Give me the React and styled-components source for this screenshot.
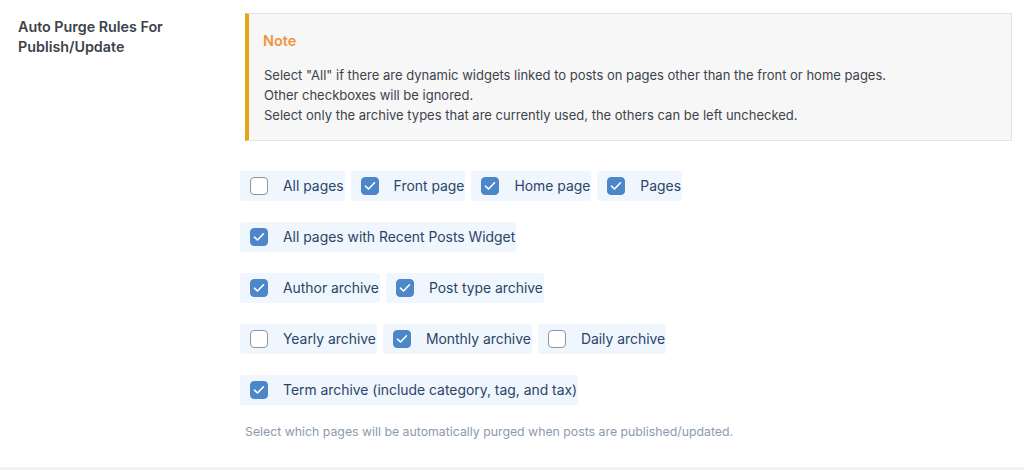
import React from 'react'
import styled, { createGlobalStyle } from 'styled-components'

const GlobalStyle = createGlobalStyle`
    body {
        margin: 0;
        background: #ffffff;
        font-family: Inter, "Open Sans", "Liberation Sans", sans-serif;
    }
`

const Section = styled.div`
    display: flex;
    width: 1024px;
    height: 470px;
    box-sizing: border-box;
    padding-top: 13px;
    border-bottom: 3px solid #f2f2f3;
`

const Label = styled.div`
    width: 222px;
    padding-left: 18px;
    padding-top: 4px;
    font-size: 14.3px;
    line-height: 20px;
    font-weight: 600;
    color: #3c434a;
`

const Content = styled.div`
    display: flex;
    flex-direction: column;
    width: 772px;
`

const Note = styled.div`
    margin-left: 5px;
    height: 128px;
    box-sizing: border-box;
    background: #f7f7f7;
    border: 1px solid #e4e4e4;
    border-left: 4px solid #e3a718;
    padding: 17px 16px 0 14px;
`

const NoteTitle = styled.div`
    font-size: 14.5px;
    font-weight: 600;
    color: #ef9540;
    line-height: 20px;
    margin-bottom: 14px;
`

const NoteText = styled.p`
    margin: 0 0 0 1px;
    font-size: 13px;
    line-height: 20px;
    color: #3c434a;
`

const Options = styled.div`
    display: flex;
    flex-direction: column;
    gap: 21px;
    margin-top: 30px;
`

const Row = styled.div`
    display: flex;
    gap: 6px;
`

const Pill = styled.label`
    display: flex;
    align-items: center;
    height: 30px;
    padding: 0 1px 0 10px;
    background: #f0f6fd;
    border-radius: 3px;
    font-size: 13.9px;
    color: #2b4468;
    white-space: nowrap;
`

const Box = styled.span`
    width: 18px;
    height: 18px;
    box-sizing: border-box;
    border-radius: 4px;
    margin-right: 15px;
    display: flex;
    align-items: center;
    justify-content: center;
    background: ${p => (p.$checked ? '#4d87c9' : '#ffffff')};
    border: 1px solid ${p => (p.$checked ? '#4d87c9' : '#8f949a')};
`

const Help = styled.p`
    margin: 19px 0 0 5px;
    font-size: 12.3px;
    line-height: 16px;
    color: #8b9aae;
`

const rows = [
    [['All pages', false], ['Front page', true], ['Home page', true], ['Pages', true]],
    [['All pages with Recent Posts Widget', true]],
    [['Author archive', true], ['Post type archive', true]],
    [['Yearly archive', false], ['Monthly archive', true], ['Daily archive', false]],
    [['Term archive (include category, tag, and tax)', true]],
]

function Check({ checked }) {
    return (
        <Box $checked={checked}>
            {checked && (
                <svg width="12" height="10" viewBox="0 0 12 10">
                    <path d="M1.5 5.2 L4.5 8 L10.5 1.8" fill="none" stroke="#fff" strokeWidth="1.6" strokeLinecap="round" strokeLinejoin="round" />
                </svg>
            )}
        </Box>
    )
}

export default function App() {
    return (
        <>
            <GlobalStyle />
            <Section>
                <Label>Auto Purge Rules For<br />Publish/Update</Label>
                <Content>
                    <Note>
                        <NoteTitle>Note</NoteTitle>
                        <NoteText>Select "All" if there are dynamic widgets linked to posts on pages other than the front or home pages.</NoteText>
                        <NoteText>Other checkboxes will be ignored.</NoteText>
                        <NoteText>Select only the archive types that are currently used, the others can be left unchecked.</NoteText>
                    </Note>
                    <Options>
                        {rows.map((row, i) => (
                            <Row key={i}>
                                {row.map(([text, checked]) => (
                                    <Pill key={text}>
                                        <Check checked={checked} />
                                        {text}
                                    </Pill>
                                ))}
                            </Row>
                        ))}
                    </Options>
                    <Help>Select which pages will be automatically purged when posts are published/updated.</Help>
                </Content>
            </Section>
        </>
    )
}
